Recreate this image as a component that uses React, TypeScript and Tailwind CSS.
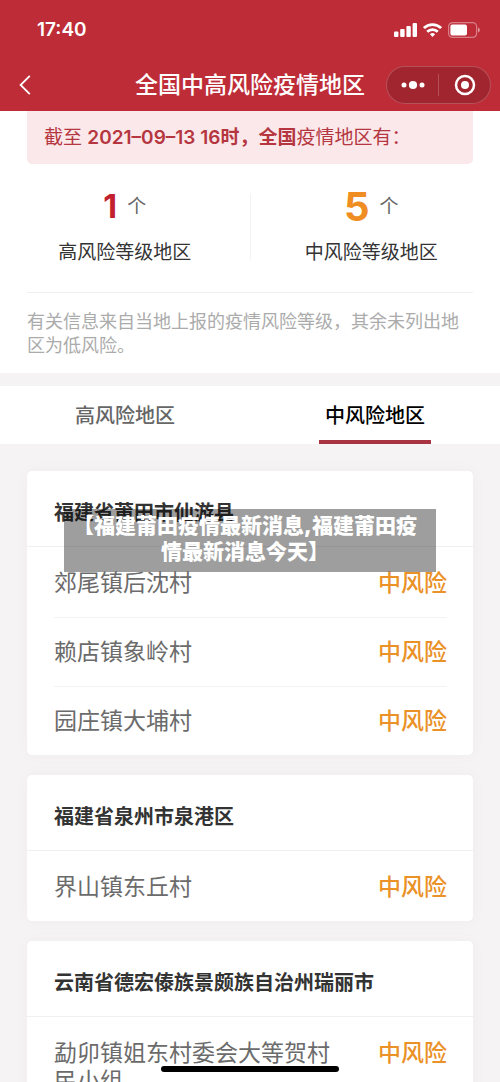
import { useState } from 'react';

interface Region {
  name: string;
  places: string[];
}

interface StatProps {
  count: number;
  label: string;
  countClass: string;
  className?: string;
}

const REGIONS: Region[] = [
  {
    name: '福建省莆田市仙游县',
    places: ['郊尾镇后沈村', '赖店镇象岭村', '园庄镇大埔村'],
  },
  {
    name: '福建省泉州市泉港区',
    places: ['界山镇东丘村'],
  },
  {
    name: '云南省德宏傣族景颇族自治州瑞丽市',
    places: ['勐卯镇姐东村委会大等贺村民小组'],
  },
];

const TABS = [
  { id: 'high', label: '高风险地区' },
  { id: 'medium', label: '中风险地区' },
];

function StatusBar() {
  return (
    <div className="flex h-[60px] items-center justify-between pr-5 pl-[37px]">
      <span className="text-[19px] font-semibold">17:40</span>
      <div className="flex items-center gap-[6px]">
        <svg width="23" height="14" viewBox="0 0 23 14" fill="currentColor">
          <rect x="0" y="8.5" width="4.4" height="5.5" rx="1" />
          <rect x="6.2" y="6" width="4.4" height="8" rx="1" />
          <rect x="12.4" y="3" width="4.4" height="11" rx="1" />
          <rect x="18.6" y="0" width="4.4" height="14" rx="1" />
        </svg>
        <svg
          width="19"
          height="14"
          viewBox="0 0 19 14"
          fill="none"
          stroke="currentColor"
          strokeWidth="2.8"
        >
          <path d="M0.9 5.1a12.3 12.3 0 0 1 17.2 0" />
          <path d="M4.2 8.8a7.5 7.5 0 0 1 10.6 0" />
          <path
            d="M9.5 14 6.9 11.3a3.8 3.8 0 0 1 5.2 0z"
            fill="currentColor"
            stroke="none"
          />
        </svg>
        <svg width="32" height="16" viewBox="0 0 32 16" fill="none">
          <rect
            x="0.6"
            y="0.6"
            width="28"
            height="14.8"
            rx="4"
            stroke="#fff"
            strokeOpacity="0.4"
            strokeWidth="1.2"
          />
          <rect x="2.4" y="2.6" width="16.6" height="10.8" rx="2" fill="#fff" />
          <path
            d="M30 5.6c1.2.5 1.8 1.3 1.8 2.4s-.6 1.9-1.8 2.4z"
            fill="#fff"
            fillOpacity="0.5"
          />
        </svg>
      </div>
    </div>
  );
}

function NavBar() {
  return (
    <div className="grid h-[51px] grid-cols-[1fr_auto_1fr] items-center pr-[9px] pb-px pl-[9px]">
      <button
        type="button"
        aria-label="返回"
        className="flex h-8 w-8 items-center justify-center"
      >
        <svg
          width="12"
          height="20"
          viewBox="0 0 12 20"
          fill="none"
          stroke="currentColor"
          strokeWidth="1.8"
        >
          <path d="M10.8 0.8 1.6 10l9.2 9.2" />
        </svg>
      </button>
      <h1 className="text-[23px] leading-8 font-medium">
        全国中高风险疫情地区
      </h1>
      <div className="flex h-[38px] w-[105px] items-center justify-self-end rounded-full border border-white/20 bg-black/15">
        <button
          type="button"
          aria-label="更多"
          className="flex flex-1 justify-center"
        >
          <svg width="24" height="10" viewBox="0 0 24 10" fill="currentColor">
            <circle cx="3" cy="5" r="2.5" />
            <circle cx="12" cy="5" r="4.1" />
            <circle cx="21" cy="5" r="2.5" />
          </svg>
        </button>
        <span className="h-[22px] w-px bg-white/20" />
        <button
          type="button"
          aria-label="关闭"
          className="flex flex-1 justify-center"
        >
          <svg width="22" height="22" viewBox="0 0 22 22" fill="none">
            <circle cx="11" cy="11" r="9" stroke="currentColor" strokeWidth="2.5" />
            <circle cx="11" cy="11" r="4" fill="currentColor" />
          </svg>
        </button>
      </div>
    </div>
  );
}

function Stat({ count, label, countClass, className = '' }: StatProps) {
  return (
    <div className={`flex flex-1 flex-col items-center ${className}`}>
      <div className="flex h-10 items-center gap-[10px]">
        <span className={`font-bold ${countClass}`}>{count}</span>
        <span className="text-[19px] text-[#666]">个</span>
      </div>
      <div className="mt-3 text-[19px] leading-7 text-[#333]">{label}</div>
    </div>
  );
}

function RegionCard({ region }: { region: Region }) {
  return (
    <section className="rounded-[5px] bg-white shadow-[0_0_16px_rgba(60,20,40,0.03)]">
      <h2 className="border-b border-[#f0f0f0] px-[27px] pt-7 pb-[19px] text-[20px] leading-7 font-bold text-[#333]">
        {region.name}
      </h2>
      <ul className="divide-y divide-[#f3f3f3] pt-[2px] pr-[26px] pl-[27px]">
        {region.places.map((place) => (
          <li
            key={place}
            className="flex justify-between gap-12 py-5 text-[23px] leading-7"
          >
            <span className="text-[#6b6b6b]">{place}</span>
            <span className="shrink-0 font-medium text-[#ea9127]">中风险</span>
          </li>
        ))}
      </ul>
    </section>
  );
}

function App() {
  const [activeTab, setActiveTab] = useState('medium');

  return (
    <div className="relative flex h-screen flex-col overflow-hidden bg-[#f5f3f4] font-['Inter','Noto_Sans_CJK_SC',sans-serif]">
      <header className="shrink-0 bg-[#be2c38] text-white">
        <StatusBar />
        <NavBar />
      </header>

      <main className="min-h-0 flex-1 overflow-hidden">
        <section className="bg-white pb-[15px]">
          <p className="mx-[27px] rounded-b-[5px] bg-[#fae8ea] pt-[13px] pb-3 pl-[17px] text-[19px] leading-7 text-[#b5363f]">
            截至 <strong className="font-semibold">2021–09–13 16时，全国</strong>
            疫情地区有：
          </p>

          <div className="mt-[23px] flex items-center">
            <Stat
              count={1}
              label="高风险等级地区"
              countClass="text-[32px] text-[#c3202f]"
              className="pr-1 pl-1"
            />
            <div className="h-[66px] w-px bg-[#f3f3f3]" />
            <Stat
              count={5}
              label="中风险等级地区"
              countClass="text-[40px] text-[#ef8d22]"
              className="pr-2"
            />
          </div>

          <p className="mx-[27px] mt-[25px] border-t border-[#f0f0f0] pt-[17px] text-[18px] leading-6 text-[#ababab]">
            有关信息来自当地上报的疫情风险等级，其余未列出地区为低风险。
          </p>
        </section>

        <nav className="mt-[13px] flex bg-white">
          {TABS.map((tab) => (
            <div key={tab.id} className="flex flex-1 justify-center">
              <button
                type="button"
                onClick={() => setActiveTab(tab.id)}
                className={`border-b-4 px-[6px] pt-4 pb-[10px] text-[20px] leading-7 font-medium ${
                  activeTab === tab.id
                    ? 'border-[#a93441] text-black'
                    : 'border-transparent text-[#666]'
                }`}
              >
                {tab.label}
              </button>
            </div>
          ))}
        </nav>

        <div className="relative space-y-5 px-[27px] pt-[27px]">
          {REGIONS.map((region) => (
            <RegionCard key={region.name} region={region} />
          ))}

          <div className="absolute inset-x-16 top-[65px] bg-black/[0.38] pt-1 pr-[10px] pb-[7px] text-center text-[21px] leading-[26px] font-black text-white">
            【福建莆田疫情最新消息,福建莆田疫情最新消息今天】
          </div>
        </div>
      </main>

      <div className="absolute bottom-[10px] left-1/2 h-[6px] w-[178px] -translate-x-1/2 rounded-full bg-black" />
    </div>
  );
}

export default App;
